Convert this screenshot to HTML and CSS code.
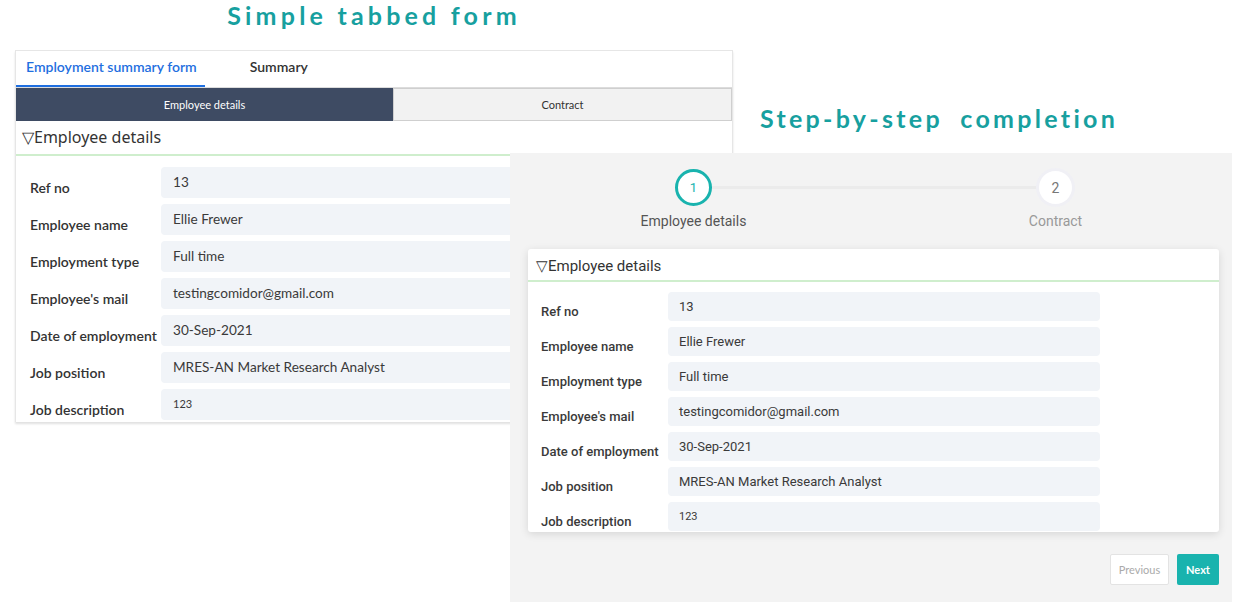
FILE: index.html
```html
<!DOCTYPE html>
<html lang="en">

<head>
    <meta charset="UTF-8">
    <meta name="viewport" content="width=device-width, initial-scale=1.0">
    <title>Form layouts</title>
    <link rel="stylesheet" href="styles.css">
</head>

<body>
    <section class="tabbed-demo">
        <h1 class="demo-title">Simple tabbed form</h1>
        <div class="tabbed-panel">
            <div class="main-tabs">
                <div class="main-tab active">Employment summary form</div>
                <div class="main-tab">Summary</div>
            </div>
            <div class="sub-tabs">
                <div class="sub-tab active">Employee details</div>
                <div class="sub-tab">Contract</div>
            </div>
            <div class="section-head">&#9661;Employee details</div>
            <div class="form-rows">
                <div class="form-row"><label>Ref no</label><div class="field">13</div></div>
                <div class="form-row"><label>Employee name</label><div class="field">Ellie Frewer</div></div>
                <div class="form-row"><label>Employment type</label><div class="field">Full time</div></div>
                <div class="form-row"><label>Employee's mail</label><div class="field">testingcomidor@gmail.com</div></div>
                <div class="form-row"><label>Date of employment</label><div class="field">30-Sep-2021</div></div>
                <div class="form-row"><label>Job position</label><div class="field">MRES-AN Market Research Analyst</div></div>
                <div class="form-row"><label>Job description</label><div class="field small">123</div></div>
            </div>
        </div>
    </section>

    <section class="step-demo">
        <h1 class="demo-title step-title">Step-by-step completion</h1>
        <div class="step-panel">
            <div class="stepper">
                <div class="step current">
                    <span class="step-dot">1</span>
                    <span class="step-name">Employee details</span>
                </div>
                <div class="step">
                    <span class="step-dot">2</span>
                    <span class="step-name">Contract</span>
                </div>
            </div>
            <div class="step-card">
                <div class="card-head">&#9661;Employee details</div>
                <div class="card-rows">
                    <div class="card-row"><label>Ref no</label><div class="field">13</div></div>
                    <div class="card-row"><label>Employee name</label><div class="field">Ellie Frewer</div></div>
                    <div class="card-row"><label>Employment type</label><div class="field">Full time</div></div>
                    <div class="card-row"><label>Employee's mail</label><div class="field">testingcomidor@gmail.com</div></div>
                    <div class="card-row"><label>Date of employment</label><div class="field">30-Sep-2021</div></div>
                    <div class="card-row"><label>Job position</label><div class="field">MRES-AN Market Research Analyst</div></div>
                    <div class="card-row"><label>Job description</label><div class="field small">123</div></div>
                </div>
            </div>
            <div class="step-actions">
                <button class="btn-prev">Previous</button>
                <button class="btn-next">Next</button>
            </div>
        </div>
    </section>
</body>

</html>
```

FILE: styles.css
```css
:root {
    --teal: #17a09f;
    --teal-bright: #19b3ae;
    --text-color: #333;
    --field-bg: #f1f4f8;
    --line-green: #cfeecd;
}

* {
    margin: 0;
    padding: 0;
    box-sizing: border-box;
}

body {
    font-family: Lato, "Noto Sans", sans-serif;
    background: #fff;
    color: var(--text-color);
    width: 1243px;
    height: 610px;
    overflow: hidden;
    position: relative;
}

.demo-title {
    font-family: Lato, "DejaVu Sans", sans-serif;
    font-weight: 700;
    font-size: 25px;
    line-height: 34px;
    letter-spacing: 4.2px;
    color: var(--teal);
    text-align: center;
}

/* tabbed form */

.tabbed-demo {
    margin-left: 15px;
    width: 718px;
}

.tabbed-demo .demo-title {
    margin-top: -2px;
}

.tabbed-panel {
    margin-top: 18px;
    border: 1px solid #e6e6e6;
    border-bottom: none;
    box-shadow: 0 2px 2px rgba(0, 0, 0, 0.12);
}

.main-tabs {
    display: flex;
    gap: 35px;
    height: 37px;
    border-bottom: 1px solid #dcdcdc;
}

.main-tab {
    flex-shrink: 0;
    white-space: nowrap;
    padding: 0 8px 0 10px;
    font-size: 14px;
    font-weight: 600;
    line-height: 32px;
    color: #333;
}

.main-tab.active {
    min-width: 188px;
    color: #1f6fe0;
    border-bottom: 2px solid #1f6fe0;
}

.sub-tabs {
    display: grid;
    grid-template-columns: 377px 1fr;
    height: 33px;
}

.sub-tab {
    display: flex;
    align-items: center;
    justify-content: center;
    font-size: 11px;
    color: #333;
    background: #f2f2f2;
    border: 1px solid #cfcfcf;
}

.sub-tab.active {
    background: #3e4b63;
    color: #fff;
    border-color: #3e4b63;
}

.section-head {
    height: 35px;
    padding-left: 6px;
    font-family: "Noto Sans", sans-serif;
    font-size: 16px;
    line-height: 33px;
    border-bottom: 2px solid var(--line-green);
}

.form-rows {
    display: flex;
    flex-direction: column;
    gap: 6px;
    padding: 11px 12px 2px 14px;
}

.form-row {
    display: grid;
    grid-template-columns: 131px 1fr;
    align-items: end;
    height: 31px;
}

.form-row label {
    font-size: 14px;
    font-weight: 600;
    line-height: 21px;
    white-space: nowrap;
}

.field {
    height: 100%;
    background: var(--field-bg);
    border-radius: 4px;
    padding: 0 12px 2px;
    font-size: 13.6px;
    display: flex;
    align-items: center;
    color: #3a3a3a;
}

.field.small {
    font-size: 11px;
}

/* step-by-step overlay */

.step-demo {
    position: absolute;
    left: 510px;
    top: 101px;
    width: 722px;
}

.step-title {
    text-align: left;
    margin-left: 250px;
    margin-bottom: 18px;
    letter-spacing: 3.3px;
    word-spacing: 8px;
}

.step-panel {
    background: #f3f3f3;
    height: 449px;
    padding: 16px 13px 0 18px;
    font-family: Roboto, "Noto Sans", sans-serif;
}

.stepper {
    display: grid;
    grid-template-columns: 1fr 1fr;
    position: relative;
    margin-left: -18px;
    margin-right: -13px;
}

.stepper::before {
    content: "";
    position: absolute;
    top: 17px;
    left: 27%;
    right: 24%;
    height: 3px;
    background: #ebebeb;
}

.step {
    display: flex;
    flex-direction: column;
    align-items: center;
    position: relative;
    padding-left: 6px;
}

.step:last-child {
    padding-left: 8px;
}

.step-dot {
    width: 33px;
    height: 33px;
    margin: 2px 0;
    border-radius: 50%;
    background: #fff;
    box-shadow: 0 0 0 3px #f0f0f5;
    display: flex;
    align-items: center;
    justify-content: center;
    font-size: 14px;
    color: #777;
}

.step.current .step-dot {
    width: 37px;
    height: 37px;
    margin: 0;
    border: 3px solid var(--teal-bright);
    box-shadow: none;
    color: var(--teal-bright);
    font-size: 13px;
}

.step-name {
    margin-top: 6px;
    font-size: 14px;
    line-height: 18px;
    color: #999;
}

.step.current .step-name {
    color: #555;
}

.step-card {
    margin-top: 19px;
    background: #fff;
    border-radius: 3px;
    box-shadow: 0 2px 8px rgba(0, 0, 0, 0.12);
    height: 283px;
    overflow: hidden;
}

.card-head {
    height: 33px;
    padding-left: 8px;
    font-size: 15px;
    line-height: 34px;
    border-bottom: 2px solid var(--line-green);
}

.card-rows {
    display: flex;
    flex-direction: column;
    gap: 6px;
    padding: 10px 0 0 13px;
}

.card-row {
    display: grid;
    grid-template-columns: 127px 432px;
    align-items: end;
    height: 29px;
}

.card-row label {
    font-size: 13px;
    font-weight: 500;
    line-height: 18px;
    white-space: nowrap;
    color: #3a3a3a;
}

.card-row .field {
    font-size: 13px;
    padding: 0 0 0 11px;
}

.card-row .field.small {
    font-size: 11px;
}

.step-actions {
    display: flex;
    justify-content: flex-end;
    gap: 8px;
    margin-top: 22px;
}

.step-actions button {
    height: 31px;
    font-family: Lato, sans-serif;
    font-size: 11px;
    border-radius: 2px;
    cursor: pointer;
}

.btn-prev {
    width: 59px;
    background: #fff;
    border: 1px solid #e3e3e3;
    color: #aaa;
}

.btn-next {
    width: 42px;
    background: var(--teal-bright);
    border: none;
    color: #fff;
    font-weight: 700;
}
```
